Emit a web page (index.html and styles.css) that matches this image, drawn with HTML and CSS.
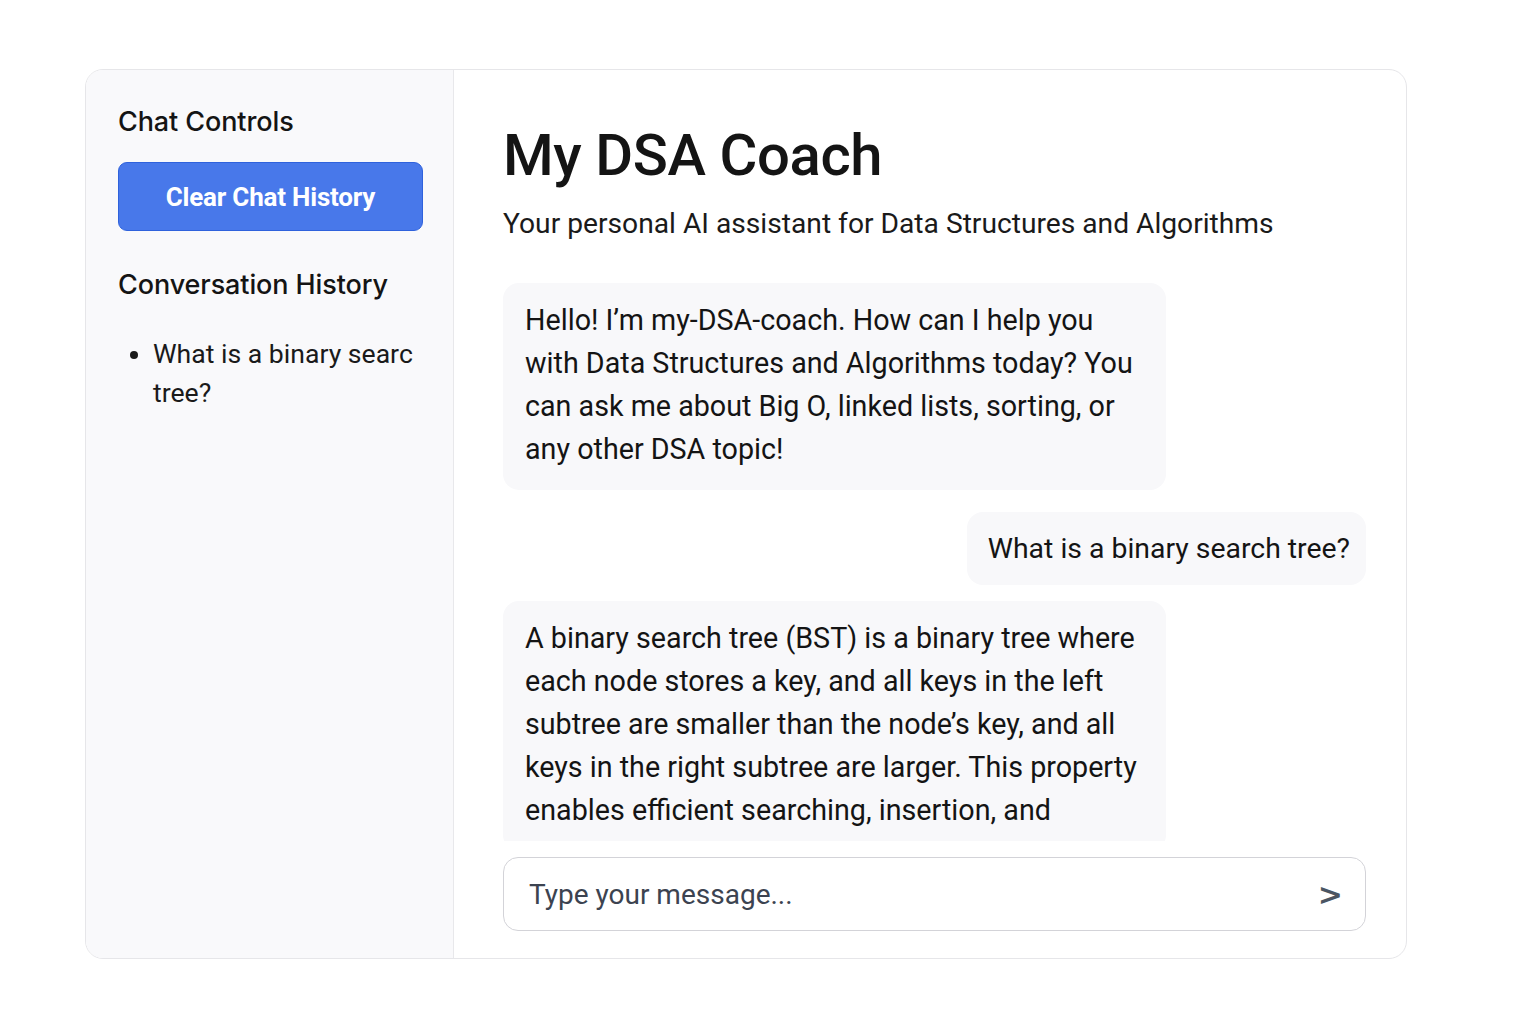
FILE: index.html
```html
<!DOCTYPE html>
<html lang="en">
<head>
<meta charset="utf-8">
<title>My DSA Coach</title>
<link rel="stylesheet" href="styles.css">
</head>
<body>
<div class="app">
  <aside class="sidebar">
    <h2 class="side-title">Chat Controls</h2>
    <button class="clear-btn">Clear Chat History</button>
    <h2 class="side-title history-title">Conversation History</h2>
    <ul class="history">
      <li>What is a binary searc<br>tree?</li>
    </ul>
  </aside>
  <main class="main">
    <h1 class="title">My DSA Coach</h1>
    <p class="subtitle">Your personal AI assistant for Data Structures and Algorithms</p>
    <div class="messages">
      <div class="bubble bot">Hello! I’m my-DSA-coach. How can I help you with Data Structures and Algorithms today? You can ask me about Big O, linked lists, sorting, or any other DSA topic!</div>
      <div class="bubble user">What is a binary search tree?</div>
      <div class="bubble bot last">A binary search tree (BST) is a binary tree where each node stores a key, and all keys in the left subtree are smaller than the node’s key, and all keys in the right subtree are larger. This property enables efficient searching, insertion, and</div>
    </div>
    <div class="composer">
      <span class="placeholder">Type your message...</span>
      <span class="send">&gt;</span>
    </div>
  </main>
</div>
</body>
</html>
```
FILE: styles.css
```css
* { box-sizing: border-box; }
html, body { margin: 0; padding: 0; background: #ffffff; }
body { font-family: Roboto, "Noto Sans", sans-serif; color: #1a1a1a; }

.app {
  margin: 69px 0 0 85px;
  width: 1322px;
  height: 890px;
  border: 1px solid #e6e6e9;
  border-radius: 18px;
  display: flex;
  overflow: hidden;
  background: #ffffff;
}

.sidebar {
  width: 368px;
  flex: none;
  background: #f9f9fb;
  border-right: 1px solid #e8e8eb;
  padding: 35px 30px 0 32px;
}

.side-title {
  font-family: Inter, "Noto Sans", sans-serif;
  font-weight: 500;
  font-size: 27px;
  color: #141414;
  margin: 0;
  line-height: 33px;
  letter-spacing: -0.1px;
}

.clear-btn {
  display: block;
  width: 305px;
  height: 69px;
  margin-top: 24px;
  background: #4878ea;
  border: 1px solid #2f62dc;
  border-radius: 9px;
  color: #ffffff;
  font-family: Roboto, sans-serif;
  font-weight: 700;
  font-size: 26px;
  letter-spacing: -0.2px;
  cursor: pointer;
}

.history-title { margin-top: 37px; }

.history {
  margin: 33px 0 0 0;
  padding-left: 35px;
  font-size: 26.6px;
  line-height: 39px;
  color: #1a1a1a;
}

.main {
  flex: 1;
  display: flex;
  flex-direction: column;
  padding: 51px 40px 27px 49px;
  min-width: 0;
}

.title {
  font-family: Roboto, sans-serif;
  font-weight: 500;
  font-size: 58px;
  line-height: 68px;
  margin: 0;
  color: #141414;
  letter-spacing: -0.4px;
}

.subtitle {
  font-size: 28.2px;
  line-height: 36px;
  margin: 17px 0 0 0;
  color: #1a1a1a;
}

.messages {
  flex: 1;
  min-height: 0;
  overflow: hidden;
  display: flex;
  flex-direction: column;
  margin-top: 41px;
}

.bubble {
  background: #f8f8fa;
  border-radius: 16px;
  font-size: 28.7px;
  line-height: 43px;
  color: #141414;
  flex: none;
}

.bubble.bot {
  align-self: flex-start;
  width: 663px;
  padding: 16px 24px 19px 22px;
}

.bubble.user {
  align-self: flex-end;
  margin-top: 22px;
  font-size: 28.4px;
  padding: 15px 16px 15px 21px;
}

.bubble.last { margin-top: 16px; }

.composer {
  flex: none;
  margin-top: 16px;
  height: 74px;
  border: 1px solid #d3d3d8;
  border-radius: 15px;
  display: flex;
  align-items: center;
  justify-content: space-between;
  padding: 0 22px 0 25px;
}

.placeholder {
  font-size: 28px;
  color: #3c4350;
}

.send {
  font-family: "DejaVu Sans", sans-serif;
  font-size: 30px;
  color: #4b5563;
  font-weight: 700;
}
```
